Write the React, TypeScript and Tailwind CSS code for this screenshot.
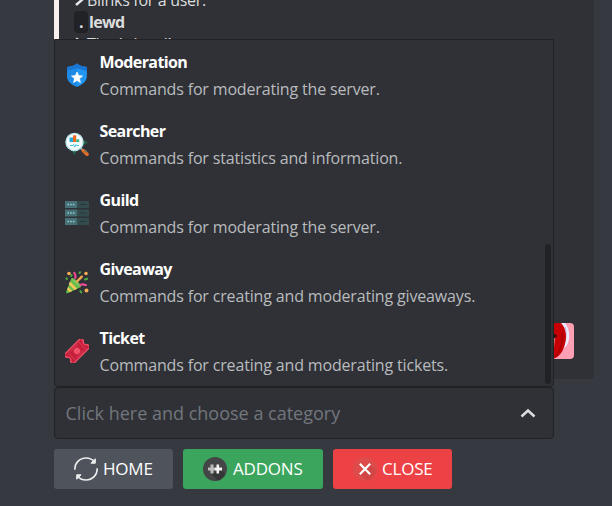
import React from "react";

const Shield = () => (
  <svg viewBox="0 0 24 24" className="h-6 w-6">
    <path d="M12 .5c3 2.200 6 3.200 9.900 3.400V13c0 5.200-4.200 8.800-9.900 10.800C6.300 21.800 2.100 18.200 2.100 13V3.900C6 3.700 9 2.700 12 .5z" fill="#2196f3" />
    <path d="M12 .5c3 2.200 6 3.200 9.900 3.400V8L12 5.500 2.100 8V3.900C6 3.700 9 2.700 12 .5z" fill="#1976d2" />
    <path d="M2.100 8 12 5.500v18.300C6.300 21.800 2.100 18.200 2.100 13z" fill="#1e88e5" />
    <path d="m12 9 1.600 3.600 3.900.4-3 2.600.9 3.900-3.400-2-3.400 2 .9-3.900-3-2.600 3.900-.4z" fill="#fff" stroke="#fff" strokeWidth=".7" />
  </svg>
);

const Search = () => (
  <svg viewBox="0 0 24 24" className="h-6 w-6">
    <path d="m16 6.500 7 4-6 4zM6 17h6l-2.500 6.500z" fill="#25604c" />
    <path d="m15.500 16 3 3" stroke="#90a4ae" strokeWidth="2" />
    <path d="m18.500 18.800 3.500 3.500" stroke="#e66a25" strokeWidth="3.600" strokeLinecap="round" />
    <path d="m20 18.700 1.500 1.500" stroke="#6f8068" strokeWidth="2" />
    <circle cx="9.500" cy="10" r="8.600" fill="#f5fcfd" stroke="#bce3e9" strokeWidth="1.300" />
    <path d="M4.500 5.500H8V10H4.500z" fill="#22a9dd" />
    <path d="M8 3.300h3.200V10H8z" fill="#f4671f" />
    <path d="M11.200 7.300h3V10h-3z" fill="#36b37e" />
    <path d="M5 13.500h2.500l1-1 1.200 2.500 1.300-2.500.8 1H14" fill="none" stroke="#3bbfe2" strokeWidth="1" />
  </svg>
);

const Server = () => (
  <svg viewBox="0 0 24 24" className="h-6 w-6">
    {[0, 8.5, 17].map((y) => (
      <g key={y}>
        <path d={`M0 ${y}h12v7H0z`} fill="#477177" />
        <path d={`M12 ${y}h12v7H12z`} fill="#344b4d" />
        <path d={`M2.500 ${y + 3.5}h1.500m1.200 0h1.500m1.200 0h1.500`} stroke="#91d0d5" strokeWidth="1.300" />
        <path d={`M15 ${y + 3.5}h6.500`} stroke="#263a3d" strokeWidth="1" />
      </g>
    ))}
  </svg>
);

const Party = () => (
  <svg viewBox="0 0 24 24" className="h-6 w-6">
    <path d="m6.500 8 9.500 9L2.500 23.200c-1 .3-1.700-.5-1.400-1.200z" fill="#64bd49" />
    <path d="m5 11.500 7.200 7.300-2.700 1.300-5.700-5.800zM3 17l4.200 4-2.500 1.200L2.200 19.600z" fill="#f7c65a" />
    <path d="M6.500 8.200c1.500-1.700 9.900 6.300 9.500 8.500-2.500.2-9.500-6-9.500-8.500z" fill="#7bc55a" />
    <path d="m12 11.500 4.800-4.800" stroke="#f4aa51" strokeWidth="2.400" strokeLinecap="round" />
    <path d="M9.200 2.800c2 1.500.8 3.200 1.300 5.200M15.500 15c2-1.700 3.500.2 5.500 0" stroke="#ec4b91" strokeWidth="2.200" fill="none" strokeLinecap="round" />
    <g fill="#f6ae54"><circle cx="4" cy="3.500" r="1.800" /><circle cx="21" cy="3.500" r="1.800" /><circle cx="21.500" cy="20.500" r="2" /></g>
    <path d="m1.500 8.200.4.900M6.200 6l.4-.9M14.500 3l.5-.8M20 9.500l2.200-.8M15.300 21l1 1.500" stroke="#4cae3c" strokeWidth="2" strokeLinecap="round" />
  </svg>
);

const Ticket = () => (
  <svg viewBox="0 0 24 24" className="h-6 w-6">
    <g transform="rotate(-45 12 12)">
      <path d="M0 5.500h24v3.600c-2.500.9-2.500 4.900 0 5.800v3.600H0v-3.600c2.500-.9 2.500-4.900 0-5.800z" fill="#c51f3b" stroke="#f0526b" strokeWidth="1.300" strokeLinejoin="round" />
      <path d="M4.500 7v10M19.500 7v10M7 7.500h10M7 16.500h10" stroke="#e34660" strokeWidth=".8" />
      <circle cx="12" cy="12" r="3.200" fill="#f0526b" />
    </g>
  </svg>
);

const Refresh = () => (
  <svg viewBox="0 0 24 24" className="h-6 w-6" fill="none" stroke="#eceded" strokeWidth="1.600">
    <path d="M.9 12.800C.3 6 5.800 1 12 1c4 0 7 1.800 9 4.300M23.100 11.200C23.700 18 18.200 23 12 23c-4 0-7-1.800-9-4.300" />
    <path d="M21.300 1.800v4.400h-4.400zM2.700 22.200v-4.400h4.400z" fill="#eceded" strokeWidth="1" />
  </svg>
);

const Puzzle = () => (
  <svg viewBox="0 0 24 24" className="h-6 w-6">
    <circle cx="12" cy="12" r="12" fill="#444546" />
    <path d="m11 16 6-3 5 3.500A12 12 0 0 1 15 23.600l-7-7z" fill="#343536" />
    <path d="M7.500 7.500h3v3H12v3h-1.500v3h-3v-3H5v-3h2.500z" fill="#bdbdbd" />
    <path d="M13.500 7.500h2.600v3H19v3h-2.900v3h-2.600v-3H12v-3h1.500z" fill="#f3f3f3" />
  </svg>
);

const Cross = () => (
  <svg viewBox="0 0 24 24" className="h-6 w-6">
    <circle cx="12" cy="12" r="12" fill="#dd4c4a" />
    <path d="m17 7 6.500 6.500a11.800 11.800 0 0 1-10 10L7 17z" fill="#cc4142" opacity=".6" />
    <path d="m6.800 6.800 10.400 10.400M17.200 6.800 6.800 17.200" stroke="#fff" strokeWidth="2.200" />
  </svg>
);

const Arrow = () => (
  <svg viewBox="0 0 13 16" className="h-4 w-[13px] shrink-0">
    <path d="M2 2.500 9 7 2 13" fill="none" stroke="#e4e5e6" strokeWidth="2.500" />
  </svg>
);

const categories = [
  { name: "Moderation", text: "Commands for moderating the server.", icon: <Shield /> },
  { name: "Searcher", text: "Commands for statistics and information.", icon: <Search /> },
  { name: "Guild", text: "Commands for moderating the server.", icon: <Server /> },
  { name: "Giveaway", text: "Commands for creating and moderating giveaways.", icon: <Party /> },
  { name: "Ticket", text: "Commands for creating and moderating tickets.", icon: <Ticket /> },
];

export default function App() {
  return (
    <main className="h-[506px] w-[612px] overflow-hidden bg-[#36393f] pl-[54px] font-['Open_Sans',sans-serif]">
      <section className="relative h-[379px] w-[540px] overflow-hidden rounded-br border-l-[5px] border-[#faf0f0] bg-[#2f3136] pl-[15px] text-[16px] tracking-[-0.3px] text-[#dcddde]">
        <div className="-mt-[11px] flex h-[22px] items-center leading-[22px]"><Arrow />Blinks for a user.</div>
        <div className="flex h-[22px] items-center font-bold tracking-[-0.7px]"><span className="mr-px flex h-[22px] w-[14px] items-center justify-center rounded bg-[#202225]">.</span>lewd</div>
        <div className="flex h-[22px] items-center leading-[22px]"><Arrow />That's lewd!</div>
        <svg viewBox="0 0 36 36" className="absolute right-5 top-[323px] h-9 w-9 rounded">
          <path d="M0 0h36v36H0z" fill="#ff9fb3" />
          <path d="M15 0h12c3 4 5 10 4 16-1 5-2 7-5 9L15 36z" fill="#eeeaff" />
          <path d="M27 4c2 6 1 12-1 18" fill="none" stroke="#b9b5d5" />
          <path d="M15 0h8c5 5 6 13 4 21-2 8-6 13-12 15z" fill="#c70005" />
          <path d="M15 35c7-5 10-14 9-25" fill="none" stroke="#960006" />
          <path d="M14 11h3l2 2-2 2h-3z" fill="#300d10" />
          <path d="M15 15h2l-1 10-1 2z" fill="#df8a90" />
        </svg>
      </section>

      <div className="relative mt-2 flex h-[52px] w-[500px] items-center justify-between rounded border border-[#202225] bg-[#2f3136] pl-[10.500px] pr-[17px]">
        <span className="text-[18px] text-[#72767d]">Click here and choose a category</span>
        <svg viewBox="0 0 16 10" className="h-[10px] w-4"><path d="m1.500 8.500 6.500-6 6.500 6" fill="none" stroke="#dcddde" strokeWidth="2.500" /></svg>
        <div className="absolute -left-px bottom-[51px] h-[348px] w-[500px] rounded-b border border-[#202225] bg-[#2f3136] pt-px">
          {categories.map((c) => (
            <div key={c.name} className="flex h-[69px] items-center gap-[10.500px] pl-[10px]">
              <div className="pb-px">{c.icon}</div>
              <div className="flex flex-col gap-[7px] whitespace-nowrap">
                <span className="h-5 text-[16px] font-bold leading-5 tracking-[-0.6px] text-white">{c.name}</span>
                <span className="h-5 text-[16px] leading-5 tracking-[-0.160px] text-[#b9bbbe]">{c.text}</span>
              </div>
            </div>
          ))}
          <div className="absolute bottom-[2px] right-[2px] h-[140px] w-[6px] rounded-full bg-[#202225]" />
        </div>
      </div>

      <div className="mt-[10px] flex gap-[10px] text-[17px] font-medium tracking-[-0.2px] text-white">
        <button className="flex h-10 w-[119px] items-center gap-[5px] rounded-[3px] bg-[#4f545c] pl-5"><Refresh />HOME</button>
        <button className="flex h-10 w-[140px] items-center gap-[6px] rounded-[3px] bg-[#3ba55d] pl-5"><Puzzle />ADDONS</button>
        <button className="flex h-10 w-[119px] items-center gap-[5px] rounded-[3px] bg-[#ed4245] pl-5"><Cross />CLOSE</button>
      </div>
    </main>
  );
}
